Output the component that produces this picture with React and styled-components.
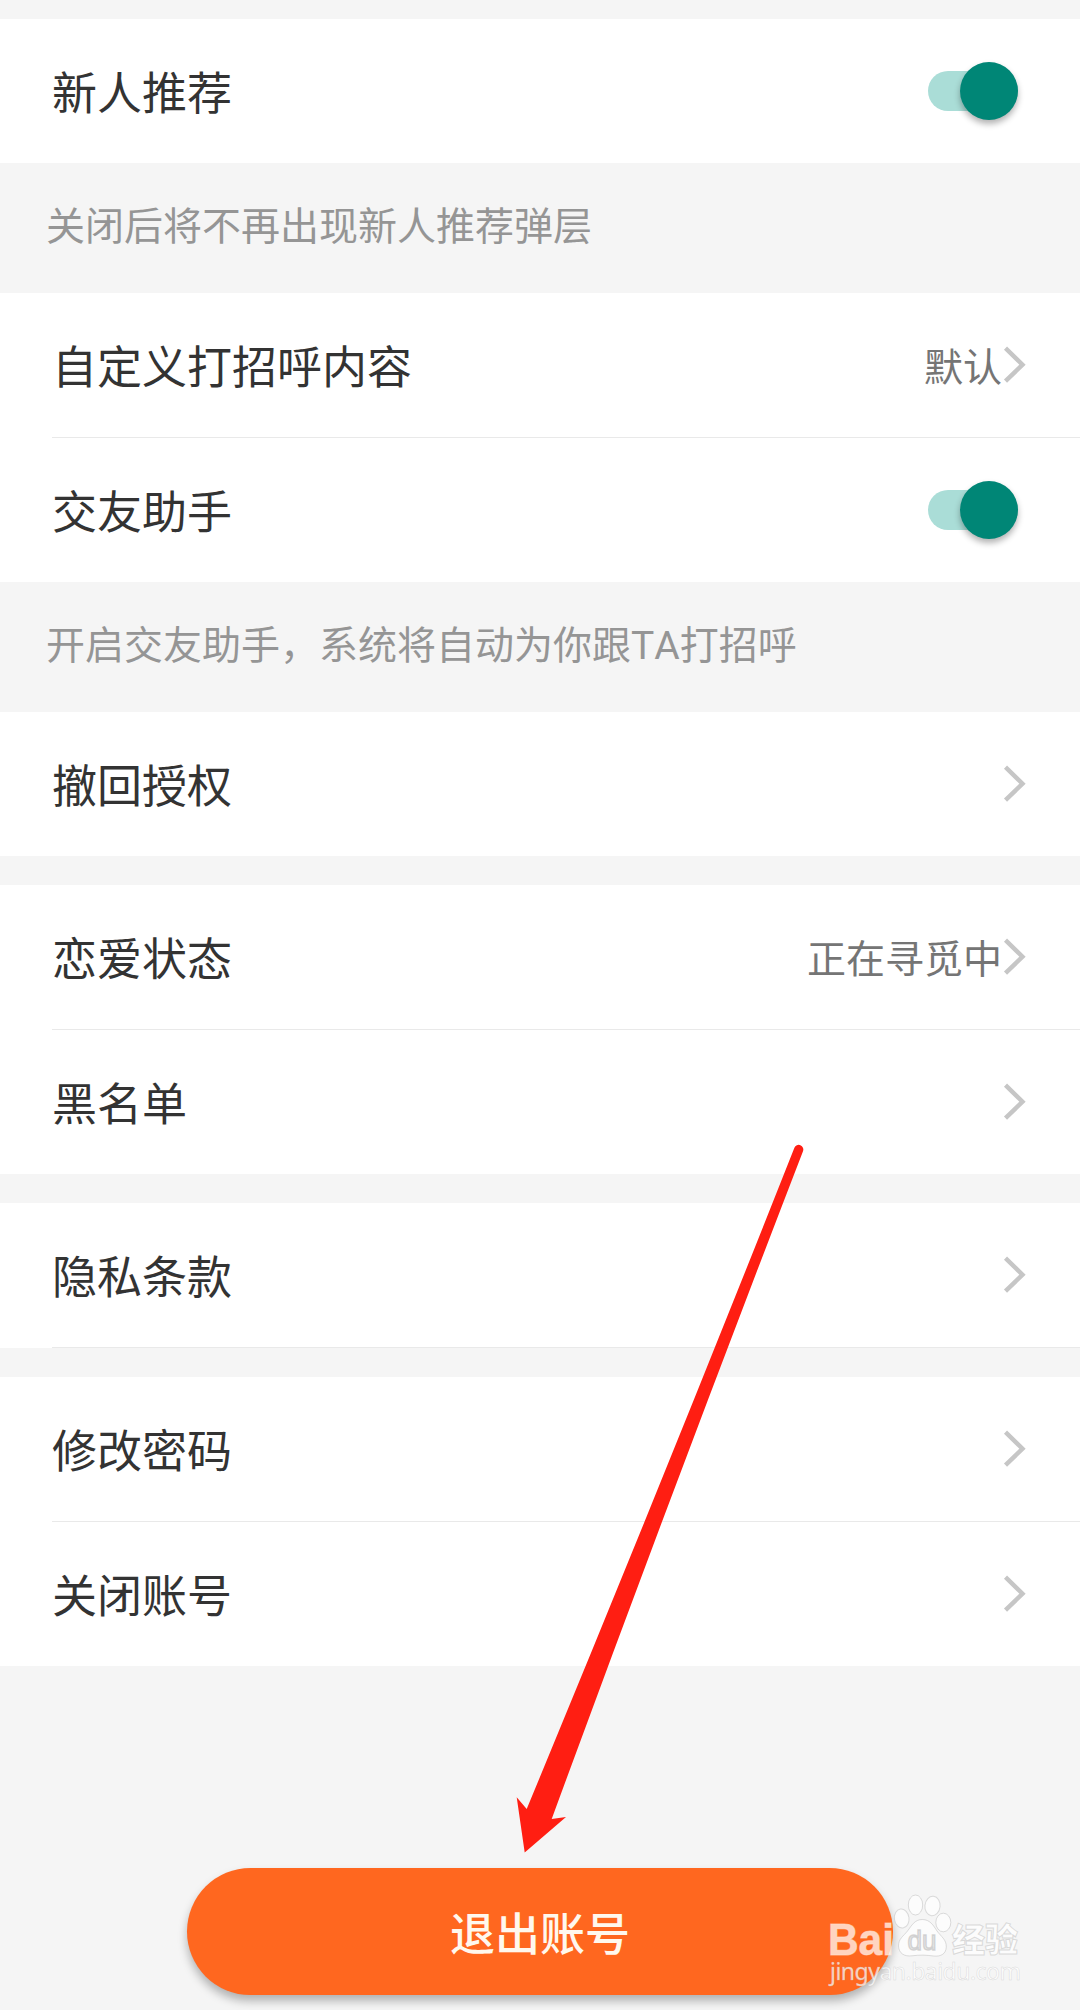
import React from "react";
import styled, { createGlobalStyle } from "styled-components";

const GlobalStyle = createGlobalStyle`
  * { box-sizing: border-box; }
  body { margin: 0; background: #f5f5f5; }
`;

const Page = styled.main`
  position: relative;
  width: 1080px;
  height: 2010px;
  padding-top: 19px;
  overflow: hidden;
  background: #f5f5f5;
  font-family: "Noto Sans CJK SC", sans-serif;
  font-kerning: none;
`;

const Group = styled.section`
  margin-bottom: ${(p) => p.$gap || 0}px;
  background: #fff;
`;

const Row = styled.div`
  display: flex;
  align-items: center;
  justify-content: space-between;
  height: 144px;
  padding: 0 52px 0 52px;
`;

const Divider = styled.div`
  height: 1px;
  margin-left: 52px;
  background: #e9e9e9;
`;

const Label = styled.span`
  font-size: 45px;
  line-height: 60px;
  color: #333;
`;

const Trailing = styled.div`
  display: flex;
  align-items: center;
`;

const Value = styled.span`
  padding-bottom: 3px;
  font-size: 39px;
  line-height: 56px;
  color: #757575;
`;

const Hint = styled.p`
  height: 130px;
  margin: 0;
  padding: 32px 46px 0;
  font-size: 39px;
  line-height: 56px;
  color: #959595;
`;

const Latin = styled.span`
  font-family: Roboto, sans-serif;
`;

const Track = styled.div`
  display: flex;
  align-items: center;
  justify-content: flex-end;
  width: 90px;
  height: 40px;
  margin-right: 10px;
  border-radius: 20px;
  background: #aaddd7;
`;

const Thumb = styled.div`
  flex: none;
  width: 58px;
  height: 58px;
  border-radius: 50%;
  background: #008676;
  box-shadow: 0 4px 6px rgba(0, 0, 0, 0.3);
`;

const Footer = styled.footer`
  display: flex;
  justify-content: center;
  padding-top: 202px;
`;

const LogoutButton = styled.button`
  width: 706px;
  height: 127px;
  padding: 1px 0 0;
  border: 0;
  border-radius: 64px;
  background: #ff671f;
  box-shadow: 0 6px 10px rgba(0, 0, 0, 0.28);
  font: 500 45px/60px "Noto Sans CJK SC", sans-serif;
  color: #fff8ee;
`;

const ArrowOverlay = styled.svg`
  position: absolute;
  left: 510px;
  top: 1140px;
`;

const Watermark = styled.svg`
  position: absolute;
  left: 820px;
  top: 1885px;
`;

const Chevron = () => (
  <svg width="26" height="40" viewBox="0 0 26 40" fill="none">
    <path d="M3.5 3.2 L20.5 19.7 L3.5 36.2" stroke="#c6c6c6" strokeWidth="4.4" />
  </svg>
);

const Switch = () => (
  <Track role="switch" aria-checked="true">
    <Thumb />
  </Track>
);

const Item = ({ label, value, toggle }) => (
  <Row>
    <Label>{label}</Label>
    {toggle ? (
      <Switch />
    ) : (
      <Trailing>
        {value && <Value>{value}</Value>}
        <Chevron />
      </Trailing>
    )}
  </Row>
);

export default function App() {
  return (
    <Page>
      <GlobalStyle />
      <Group>
        <Item label="新人推荐" toggle />
      </Group>
      <Hint>关闭后将不再出现新人推荐弹层</Hint>
      <Group>
        <Item label="自定义打招呼内容" value="默认" />
        <Divider />
        <Item label="交友助手" toggle />
      </Group>
      <Hint>
        开启交友助手，系统将自动为你跟<Latin>TA</Latin>打招呼
      </Hint>
      <Group $gap={29}>
        <Item label="撤回授权" />
      </Group>
      <Group $gap={29}>
        <Item label="恋爱状态" value="正在寻觅中" />
        <Divider />
        <Item label="黑名单" />
      </Group>
      <Group $gap={29}>
        <Item label="隐私条款" />
        <Divider />
      </Group>
      <Group>
        <Item label="修改密码" />
        <Divider />
        <Item label="关闭账号" />
      </Group>
      <Footer>
        <LogoutButton>退出账号</LogoutButton>
      </Footer>
      <ArrowOverlay width="300" height="720" viewBox="510 1140 300 720">
        <path
          d="M794.4 1147.8 A4.6 4.6 0 0 1 803 1151.2 Q675 1483 551.7 1819 L566 1817 L524.7 1852.5 L516.7 1797.3 L526.7 1809 Q663 1480 794.4 1147.8 Z"
          fill="#ff1e12"
        />
      </ArrowOverlay>
      <Watermark width="220" height="110" viewBox="820 1885 220 110">
        <g
          fill="#fff"
          fillOpacity="0.72"
          stroke="#c4c4c4"
          strokeOpacity="0.6"
          strokeWidth="1"
          fontFamily='"Liberation Sans", sans-serif'
        >
          <text x="828" y="1954.5" fontSize="44" fontWeight="700" stroke="#ffe0d0" textLength="66" lengthAdjust="spacingAndGlyphs">
            Bai
          </text>
          <ellipse cx="901.7" cy="1918.5" rx="7.3" ry="9.5" transform="rotate(-8 901.7 1918.5)" />
          <ellipse cx="915.5" cy="1905" rx="7.2" ry="10" />
          <ellipse cx="932.5" cy="1906" rx="7.6" ry="9.8" transform="rotate(6 932.5 1906)" />
          <ellipse cx="943.3" cy="1922.5" rx="7.5" ry="9.3" />
          <path d="M922.3 1919.5 C930 1919.5 933.5 1925.5 937 1931 C941 1936.5 946.5 1939.5 946.3 1947 C946 1954.5 940 1956.8 933.5 1956 C926 1955 920 1954.8 912 1955.8 C904.5 1956.8 898.8 1953.5 898.5 1946 C898.3 1939 903.5 1936 907.5 1931 C911.5 1925.8 914.5 1919.5 922.3 1919.5 Z" />
          <text x="907.5" y="1949.5" fontSize="27" fill="#e4e4e4" stroke="#bdbdbd" strokeWidth="1.5" textLength="29" lengthAdjust="spacingAndGlyphs">
            du
          </text>
          <text x="952" y="1951.5" fontSize="33" fontWeight="900" fontFamily='"Noto Sans CJK SC", sans-serif' textLength="66">
            经验
          </text>
          <text x="830" y="1980" fontSize="23" fontFamily='"Noto Sans", sans-serif' strokeWidth="0.5" textLength="191">
            jingyan.baidu.com
          </text>
        </g>
      </Watermark>
    </Page>
  );
}
